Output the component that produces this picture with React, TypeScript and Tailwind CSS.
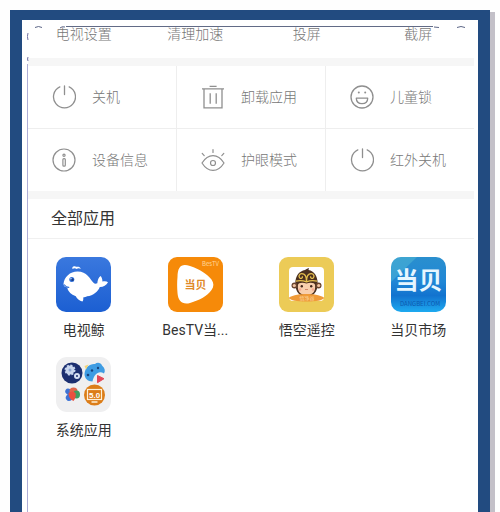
import React from 'react';

const PowerIcon = () => (
  <svg className="w-6 h-6 shrink-0" viewBox="0 0 24 24" fill="none" stroke="#8f8f8f" strokeWidth="1.3" strokeLinecap="round">
    <path d="M7.8 1.9a11 11 0 1 0 9.400 0" />
    <path d="M12.500 1v8.6" />
  </svg>
);

const TrashIcon = () => (
  <svg className="w-6 h-6 shrink-0" viewBox="0 0 24 24" fill="none" stroke="#8f8f8f" strokeWidth="1.3">
    <path d="M1 3.8h22M8.6 1.3h7M3 3.8v19h18v-19M9.2 8.2v10.6M15.2 8.2v10.6" />
  </svg>
);

const SmileIcon = () => (
  <svg className="w-6 h-6 shrink-0" viewBox="0 0 24 24" fill="none" stroke="#8f8f8f" strokeWidth="1.3">
    <circle cx="12" cy="12" r="11" />
    <path d="M6.3 13.2h11.4c0 3.5-2.5 5.4-5.7 5.4s-5.7-1.9-5.7-5.4z" strokeLinejoin="round" />
    <circle cx="8.8" cy="7.6" r="1" fill="#8f8f8f" stroke="none" />
    <circle cx="15.2" cy="7.6" r="1" fill="#8f8f8f" stroke="none" />
  </svg>
);

const InfoIcon = () => (
  <svg className="w-6 h-6 shrink-0" viewBox="0 0 24 24" fill="none" stroke="#8f8f8f" strokeWidth="1.2">
    <circle cx="12" cy="12" r="11" />
    <circle cx="12" cy="7.2" r="1.1" />
    <rect x="10.9" y="10.6" width="2.4" height="7.6" rx="1" />
  </svg>
);

const EyeIcon = () => (
  <svg className="w-6 h-6 shrink-0" viewBox="0 0 24 24" fill="none" stroke="#8f8f8f" strokeWidth="1.2" strokeLinecap="round">
    <path d="M1 15C4 10.200 7.600 7.600 12 7.600S20 10.200 23 15C20 19.800 16.400 22.400 12 22.400S4 19.800 1 15z" />
    <circle cx="12" cy="15" r="2.500" />
    <path d="M12 1.600v2.800M1.200 5.400l2 2.200M22.800 5.400l-2 2.200" />
  </svg>
);

const WhaleLogo = () => (
  <svg className="w-[55px] h-[55px]" viewBox="0 0 55 55">
    <defs>
      <linearGradient id="whale-bg" x1="0" y1="0" x2="0" y2="1">
        <stop offset="0" stopColor="#3a78de" />
        <stop offset="1" stopColor="#1c5fd2" />
      </linearGradient>
    </defs>
    <rect width="55" height="55" rx="10" fill="url(#whale-bg)" />
    <path
      d="M7.500 27C8 20 14 14.500 21.500 14.500C31 14.500 34 22 37.500 25.800C38.500 27 40 27 41.300 26.300C41.500 23 42.800 20 44.800 19C46 20.800 46.500 22.800 46.400 24.600C48.500 24 50.800 24.200 52 25.200C50.500 28.500 47 30 43.800 29.900C42 34.500 37.500 38.500 31 39.200C30 40 28.500 40.300 27.200 40.400C27.500 42.200 27.300 43.400 26.400 44.600C23.500 43.800 20.800 41.800 19.800 39.200C15 37.500 12.500 34.800 11.300 31.500L12.600 30.600C10 30.400 7.600 29.500 7.500 27z"
      fill="#fff"
    />
    <path d="M8 27.500c1.500 2 3.500 3 5.200 2.800" fill="none" stroke="#2b6cd8" strokeWidth="1.200" />
    <circle cx="15.800" cy="22.500" r="2.500" fill="#2b6cd8" />
    <circle cx="16.400" cy="22.800" r="1.300" fill="#173b82" />
    <circle cx="15" cy="21.700" r=".6" fill="#fff" />
    <path d="M16.500 12c-.8-2.200 1-3.500 3-2.500 1.800.6 4.500-.6 5.200 2.500-1.500-1-3-.8-4 .1-1.200-1-2.800-1-4.200-.1z" fill="#fff" />
  </svg>
);

const BesTvLogo = () => (
  <svg className="w-[55px] h-[55px] font-['Noto_Sans_CJK_SC',sans-serif]" viewBox="0 0 55 55">
    <rect width="55" height="55" rx="9" fill="#f68a09" />
    <path d="M9.500 20C9.500 9 14 6 22 9C32 12.500 39 17 43.500 22.500C46 26 46 29.500 43.500 33C39 39 32 43 22 46C14.500 48 10 44 9.500 36C9 30 9 25 9.500 20z" fill="#fff" />
    <text x="16.500" y="31.500" fontSize="11" fontWeight="700" fill="#e08a28">当贝</text>
    <text x="34" y="8.500" fontSize="6" fill="#ffd699">BesTV</text>
  </svg>
);

const MonkeyLogo = () => (
  <svg className="w-[55px] h-[55px] font-['Noto_Sans_CJK_SC',sans-serif]" viewBox="0 0 55 55">
    <rect width="55" height="55" rx="9" fill="#eccb57" />
    <rect x="10" y="10" width="35" height="34" rx="4" fill="#fff" />
    <path d="M16.300 27C16.300 18 20.500 14.200 26 13C27 12.300 28 11.500 30 11L29.500 13C35 14.200 38.700 18.500 38.700 27C38.500 35 34.500 39.500 27.500 39.500S16.500 35 16.300 27z" fill="#4b3020" />
    <circle cx="15.500" cy="28.500" r="3" fill="#68432d" />
    <circle cx="39.500" cy="28.500" r="3" fill="#68432d" />
    <circle cx="15.300" cy="28.500" r="1.600" fill="#f3c6a4" />
    <circle cx="39.700" cy="28.500" r="1.600" fill="#f3c6a4" />
    <path d="M19 28C19 25.500 24 25 27.500 26.500C31 25 36 25.500 36 28C37 35 33 38 27.500 38S18 35 19 28z" fill="#f8cfae" />
    <path
      d="M16.800 24.200c3.800-1 6.600-1 10.700.6 4.100-1.600 6.900-1.600 10.700-.6M27.500 24.500c0-4-1.500-7.800-4.700-7.800-2.500 0-3.700 2.800-2 4.300 1.500 1.200 3.300-.5 2.300-1.700M27.500 24.500c0-4 1.500-7.800 4.700-7.800 2.500 0 3.700 2.800 2 4.300-1.500 1.200-3.300-.5-2.300-1.700"
      fill="none"
      stroke="#e6c04f"
      strokeWidth="1.300"
    />
    <circle cx="22.800" cy="29.300" r="1.200" fill="#40251a" />
    <circle cx="32.200" cy="29.300" r="1.200" fill="#40251a" />
    <circle cx="21" cy="32.500" r="1.300" fill="#f5aa91" />
    <circle cx="34" cy="32.500" r="1.300" fill="#f5aa91" />
    <path d="M26 32.500h3" stroke="#c87859" strokeWidth=".8" />
    <path d="M9.500 41C14 37.500 22 37 27.500 37S41 37.500 45.500 41C43 43.500 38 44.500 27.500 44.500S12 43.500 9.500 41z" fill="#ef9a38" />
    <text x="20.500" y="43" fontSize="5" fill="#fbd9a3">悟净谷</text>
  </svg>
);

const MarketLogo = () => (
  <svg className="w-[55px] h-[55px] font-['Noto_Sans_CJK_SC',sans-serif]" viewBox="0 0 55 55">
    <defs>
      <linearGradient id="market-bg" x1="0" y1="0" x2="0" y2="1">
        <stop offset="0" stopColor="#2a8fce" />
        <stop offset=".45" stopColor="#2087d6" />
        <stop offset=".7" stopColor="#1273cf" />
        <stop offset="1" stopColor="#1eaaf0" />
      </linearGradient>
    </defs>
    <rect width="55" height="55" rx="10" fill="url(#market-bg)" />
    <path d="M0 10A10 10 0 0 1 10 0H26L0 25z" fill="#5cc5d8" opacity=".4" />
    <text x="3.500" y="32" fontSize="24" fontWeight="700" fill="#e6f6ff">当贝</text>
    <text x="9" y="48.500" fontSize="6" fill="#0b58ae">DANGBEI.COM</text>
  </svg>
);

const SystemLogo = () => (
  <svg className="w-[55px] h-[55px] font-['Liberation_Sans',sans-serif]" viewBox="0 0 55 55">
    <rect width="55" height="55" rx="11" fill="#efeff0" />
    <circle cx="16" cy="16" r="10.500" fill="#1c2f70" />
    <circle cx="14" cy="13" r="4.500" fill="#c9d6ee" stroke="#c9d6ee" strokeWidth="2" strokeDasharray="2 1.500" />
    <circle cx="14" cy="13" r="1.500" fill="#8ea7d5" />
    <circle cx="21" cy="19" r="2" fill="none" stroke="#d8e2f5" strokeWidth="2" />
    <path d="M28.500 17C29 10 34 6.500 39 7C41 5 45 5.500 46 8.500C49 11 49.500 14 48 16.500C43 13 38 17 36.500 24.500C31.500 24.500 28.500 21 28.500 17z" fill="#3e9ce3" />
    <path d="M28.500 9l4-1.500-2.500 5z" fill="#f4d476" />
    <circle cx="36" cy="13.500" r="1.200" fill="#17447e" />
    <circle cx="42" cy="11" r="1.200" fill="#17447e" />
    <circle cx="32" cy="18" r="1.300" fill="#17447e" />
    <path d="M41.500 18.500l6.500 3.200-6.500 4z" fill="#e34858" stroke="#e34858" strokeLinejoin="round" />
    <g transform="translate(16.500 38)">
      <ellipse cx="-3.500" cy="-3" rx="4" ry="3" transform="rotate(35 -3.500 -3)" fill="#3d73d5" />
      <ellipse cx="1" cy="-4" rx="4" ry="3.500" fill="#df674c" />
      <ellipse cx="4" cy="-.5" rx="3.500" ry="4" fill="#3c9d62" />
      <ellipse cx="-2.500" cy="2" rx="4.500" ry="3.500" transform="rotate(-35 -2.500 2)" fill="#3d73d5" />
      <path d="M-4-2q4-3 7 0 1 4-2 8-5-2-5-8z" fill="#e9503f" />
    </g>
    <circle cx="38.500" cy="38" r="10.500" fill="#dc7d18" />
    <rect x="31.500" y="32.500" width="14" height="10" fill="none" stroke="#fff0d5" strokeWidth="1.200" />
    <path d="M35.500 45h6" stroke="#fff0d5" strokeWidth="1.500" />
    <text x="33" y="40.500" fontSize="8" fontWeight="700" fill="#fff">5.0</text>
  </svg>
);

const shortcuts = ['电视设置', '清理加速', '投屏', '截屏'];

const tools = [
  { label: '关机', icon: <PowerIcon /> },
  { label: '卸载应用', icon: <TrashIcon /> },
  { label: '儿童锁', icon: <SmileIcon /> },
  { label: '设备信息', icon: <InfoIcon /> },
  { label: '护眼模式', icon: <EyeIcon /> },
  { label: '红外关机', icon: <PowerIcon /> },
];

const apps = [
  { label: '电视鲸', logo: <WhaleLogo /> },
  { label: 'BesTV当...', logo: <BesTvLogo /> },
  { label: '悟空遥控', logo: <MonkeyLogo /> },
  { label: '当贝市场', logo: <MarketLogo /> },
  { label: '系统应用', logo: <SystemLogo /> },
];

export default function App() {
  return (
    <div className="min-h-screen flex flex-col bg-[#fefefe] px-2.5 pt-2.5 font-[Roboto,'Noto_Sans_CJK_SC',sans-serif]">
      <div className="flex-1 flex flex-col border-x-12 border-t-10 border-[#224b80] bg-white pt-1.5 pl-[5px] pr-1 shadow-[5px_2px_0_#c3c0c8]">
        <main className="relative flex-1 flex flex-col">
          {/* remains of the phone outline around the panel */}
          <div className="absolute top-0 left-[39px] right-[41px] h-px bg-[#626b86]" />
          <svg className="absolute top-0 left-0 w-10 h-10" viewBox="0 0 40 40" fill="none" stroke="#5d6686">
            <path d="M8 1.500q3.500-2 7 0M33 2q2-2 5-1" />
            <path d="M1 7q-1.200 3.500 0 7M1 31q-1 2 0 4" stroke="#7372a4" />
          </svg>
          <svg className="absolute top-0 right-0 w-10 h-4" viewBox="0 0 40 16" fill="none" stroke="#5d6686">
            <path d="M0 1l5 .5M23 1.500q4-2 8 0" />
          </svg>
          <div className="absolute top-[38px] bottom-0 left-0 w-px bg-[#aeaed6]" />

          <div className="flex-1 flex flex-col pl-px">
            <nav className="grid grid-cols-4 h-8 text-sm leading-4 font-light text-[#777]">
              {shortcuts.map((label) => (
                <button key={label} className="self-start text-center">{label}</button>
              ))}
            </nav>

            <section className="grid grid-cols-3 gap-px border-y-8 border-[#f6f6f6] bg-[#eee]">
              {tools.map(({ label, icon }) => (
                <button key={label} className="flex items-center gap-4 h-[62px] pl-6 bg-white text-sm font-light text-[#777]">
                  {icon}
                  <span>{label}</span>
                </button>
              ))}
            </section>

            <h2 className="h-10 pl-[23px] text-base leading-10 text-[#333] border-b border-[#f0f0f0]">全部应用</h2>

            <section className="grid grid-cols-4 gap-y-[17px] pt-[18px]">
              {apps.map(({ label, logo }) => (
                <button key={label} className="flex flex-col items-center gap-2 text-sm text-[#333]">
                  {logo}
                  <span>{label}</span>
                </button>
              ))}
            </section>
          </div>
        </main>
      </div>
    </div>
  );
}
